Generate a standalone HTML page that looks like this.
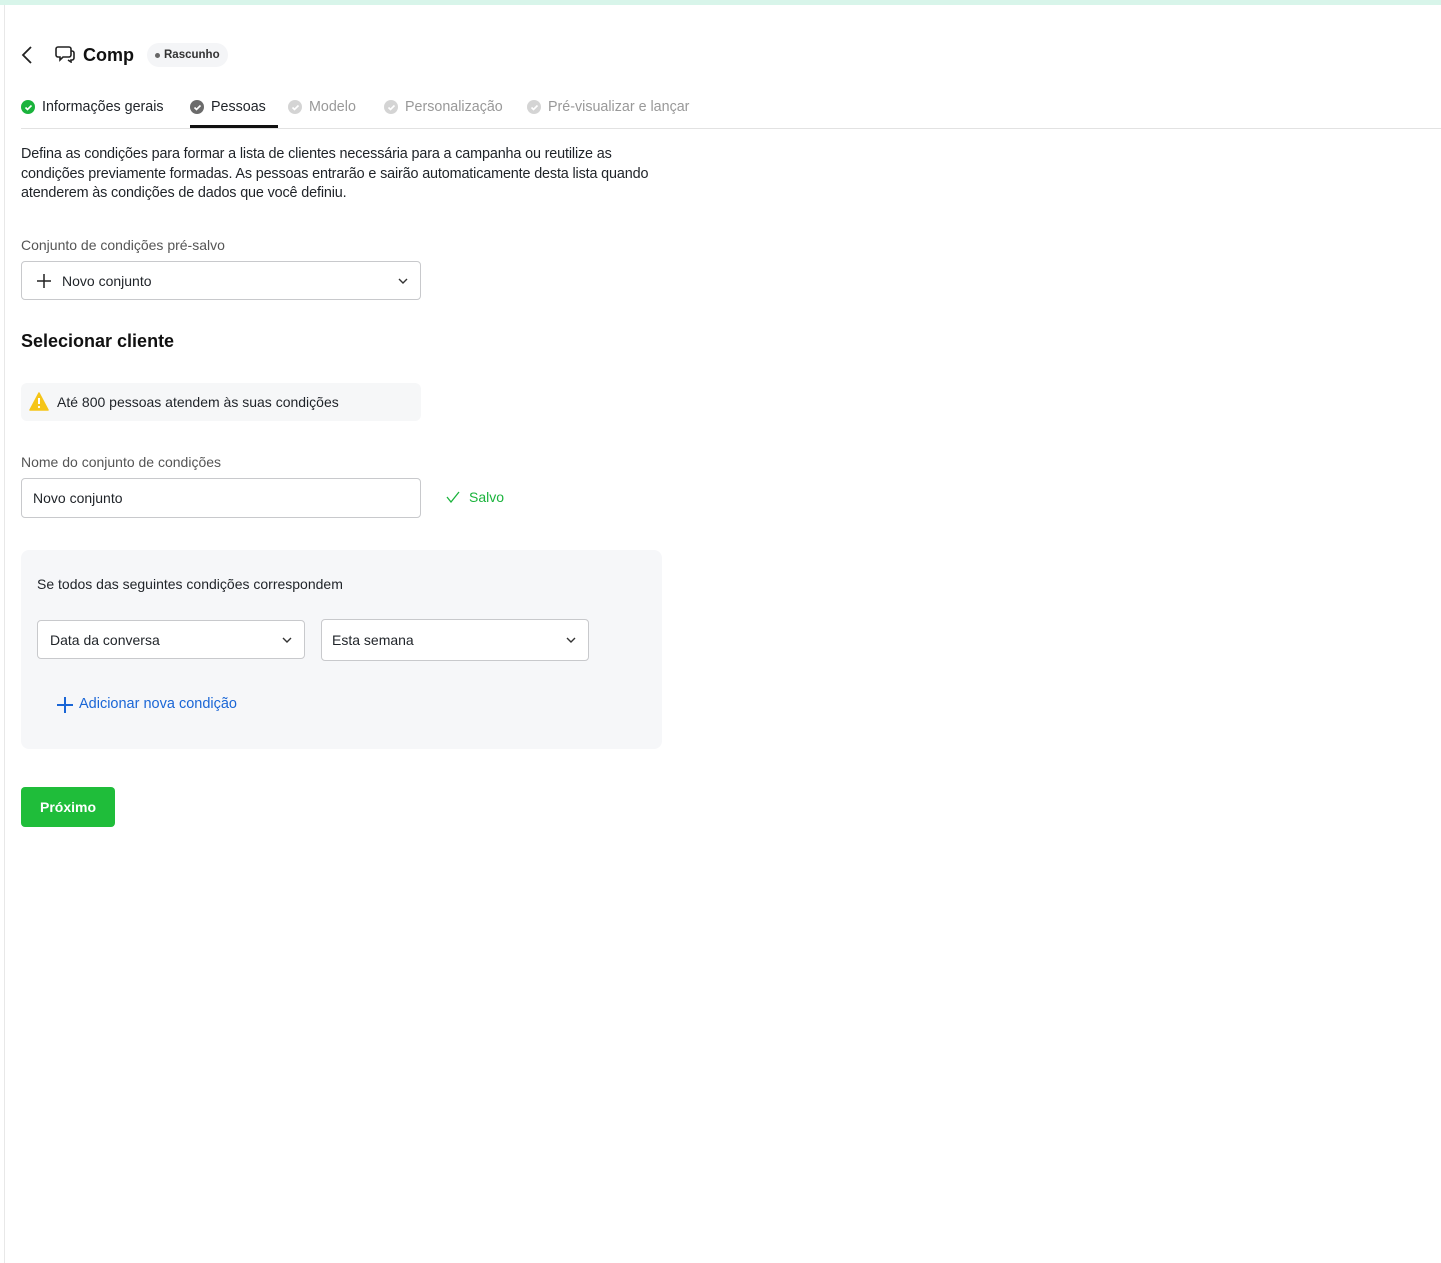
<!DOCTYPE html>
<html><head><meta charset="utf-8"><style>
*{box-sizing:border-box;margin:0;padding:0}
body{width:1441px;height:1263px;background:#fff;font-family:"Liberation Sans",sans-serif;color:#1f2328;font-size:13.5px;position:relative;overflow:hidden}
.top{position:absolute;left:0;top:0;width:1441px;height:5px;background:#d8f5ea}
.lb{position:absolute;left:4px;top:5px;width:1px;height:1258px;background:#e8e8e8}
.abs{position:absolute}
.tab{position:absolute;top:99px;display:flex;align-items:center;gap:7px;font-size:14.3px}
.ck{width:14px;height:14px;border-radius:50%;display:inline-flex;align-items:center;justify-content:center}
.box{position:absolute;border:1px solid #c8c9cc;border-radius:4px;background:#fff;display:flex;align-items:center;font-size:14px}
.chev{position:absolute;right:12px;top:50%;margin-top:-4px}
</style></head><body>
<div class="top"></div><div class="lb"></div>
<svg class="abs" style="left:20px;top:45px" width="14" height="20" viewBox="0 0 14 20"><path d="M11 2 L3 10 L11 18" fill="none" stroke="#222" stroke-width="1.8"/></svg>
<svg class="abs" style="left:55px;top:45px" width="20" height="18" viewBox="0 0 20 18"><path d="M3 2h11a2 2 0 0 1 2 2v6a2 2 0 0 1-2 2H8l-3 3v-3H3a2 2 0 0 1-2-2V4a2 2 0 0 1 2-2z" fill="none" stroke="#222" stroke-width="1.6"/><path d="M16 6h1a2 2 0 0 1 2 2v5a2 2 0 0 1-2 2h-1v2l-3-2" fill="none" stroke="#222" stroke-width="1.6"/></svg>
<div class="abs" style="left:83px;top:45px;font-size:18px;font-weight:bold;color:#111">Comp</div>
<div class="abs" style="left:147px;top:43px;height:24px;padding:0 8px;border-radius:12px;background:#f4f5f7;font-size:11.5px;font-weight:bold;display:flex;align-items:center;gap:4px;color:#333"><span style="width:5px;height:5px;border-radius:50%;background:#666"></span>Rascunho</div>

<div class="tab" style="left:21px"><span class="ck" style="background:#1ab33c"><svg width="9" height="9" viewBox="0 0 9 9"><path d="M1.5 4.5l2 2 4-4" fill="none" stroke="#fff" stroke-width="1.6"/></svg></span><span style="color:#1f2328">Informações gerais</span></div>
<div class="tab" style="left:190px"><span class="ck" style="background:#6b6b6b"><svg width="9" height="9" viewBox="0 0 9 9"><path d="M1.5 4.5l2 2 4-4" fill="none" stroke="#fff" stroke-width="1.6"/></svg></span><span>Pessoas</span></div>
<div class="abs" style="left:190px;top:125px;width:88px;height:3px;background:#111"></div>
<div class="tab" style="left:288px;color:#999"><span class="ck" style="background:#d4d4d4"><svg width="9" height="9" viewBox="0 0 9 9"><path d="M1.5 4.5l2 2 4-4" fill="none" stroke="#fff" stroke-width="1.6"/></svg></span><span>Modelo</span></div>
<div class="tab" style="left:384px;color:#999"><span class="ck" style="background:#d4d4d4"><svg width="9" height="9" viewBox="0 0 9 9"><path d="M1.5 4.5l2 2 4-4" fill="none" stroke="#fff" stroke-width="1.6"/></svg></span><span>Personalização</span></div>
<div class="tab" style="left:527px;color:#999"><span class="ck" style="background:#d4d4d4"><svg width="9" height="9" viewBox="0 0 9 9"><path d="M1.5 4.5l2 2 4-4" fill="none" stroke="#fff" stroke-width="1.6"/></svg></span><span>Pré-visualizar e lançar</span></div>
<div class="abs" style="left:21px;top:128px;width:1420px;height:1px;background:#e2e2e2"></div>

<div class="abs" style="left:21px;top:145px;width:700px;line-height:19.5px;font-size:14.4px;letter-spacing:-0.15px">Defina as condições para formar a lista de clientes necessária para a campanha ou reutilize as<br>condições previamente formadas. As pessoas entrarão e sairão automaticamente desta lista quando<br>atenderem às condições de dados que você definiu.</div>

<div class="abs" style="left:21px;top:237px;color:#555;font-size:14px">Conjunto de condições pré-salvo</div>
<div class="box" style="left:21px;top:261px;width:400px;height:39px;padding-left:40px">Novo conjunto
<svg class="abs" style="left:14px;top:11px" width="16" height="16" viewBox="0 0 16 16"><path d="M8 1v14M1 8h14" stroke="#222" stroke-width="1.5"/></svg>
<svg class="chev" width="10" height="8" viewBox="0 0 10 8"><path d="M1 2l4 4 4-4" fill="none" stroke="#333" stroke-width="1.4"/></svg></div>

<div class="abs" style="left:21px;top:331px;font-size:18px;font-weight:bold;color:#111">Selecionar cliente</div>

<div class="abs" style="left:21px;top:383px;width:400px;height:38px;background:#f6f7f8;border-radius:6px;display:flex;align-items:center;padding-left:36px;font-size:14px">Até 800 pessoas atendem às suas condições
<svg class="abs" style="left:8px;top:9px" width="20" height="19" viewBox="0 0 20 19"><path d="M10 1L19 18H1z" fill="#f5c518" stroke="#f5c518" stroke-linejoin="round" stroke-width="1.5"/><path d="M10 6v6" stroke="#fff" stroke-width="2"/><circle cx="10" cy="15" r="1.1" fill="#fff"/></svg></div>

<div class="abs" style="left:21px;top:454px;color:#555;font-size:14px">Nome do conjunto de condições</div>
<div class="box" style="left:21px;top:478px;width:400px;height:40px;padding-left:11px">Novo conjunto</div>
<svg class="abs" style="left:446px;top:491px" width="14" height="12" viewBox="0 0 14 12"><path d="M1 6l4 5 8-10" fill="none" stroke="#1ab33c" stroke-width="1.3"/></svg>
<div class="abs" style="left:469px;top:489px;color:#1ab33c;font-size:14px">Salvo</div>

<div class="abs" style="left:21px;top:550px;width:641px;height:199px;background:#f6f7f9;border-radius:8px"></div>
<div class="abs" style="left:37px;top:576px;font-size:14px">Se todos das seguintes condições correspondem</div>
<div class="box" style="left:37px;top:620px;width:268px;height:39px;padding-left:12px">Data da conversa<svg class="chev" width="10" height="8" viewBox="0 0 10 8"><path d="M1 2l4 4 4-4" fill="none" stroke="#333" stroke-width="1.4"/></svg></div>
<div class="box" style="left:321px;top:619px;width:268px;height:42px;padding-left:10px">Esta semana<svg class="chev" width="10" height="8" viewBox="0 0 10 8"><path d="M1 2l4 4 4-4" fill="none" stroke="#333" stroke-width="1.4"/></svg></div>
<svg class="abs" style="left:56px;top:696px" width="18" height="18" viewBox="0 0 18 18"><path d="M9 1v16M1 9h16" stroke="#1a66d6" stroke-width="2"/></svg>
<div class="abs" style="left:79px;top:696px;color:#1a66d6;font-size:14.5px">Adicionar nova condição</div>

<div class="abs" style="left:21px;top:787px;width:94px;height:40px;background:#1fbd3a;border-radius:4px;color:#fff;font-weight:bold;font-size:14px;display:flex;align-items:center;justify-content:center">Próximo</div>
</body></html>
